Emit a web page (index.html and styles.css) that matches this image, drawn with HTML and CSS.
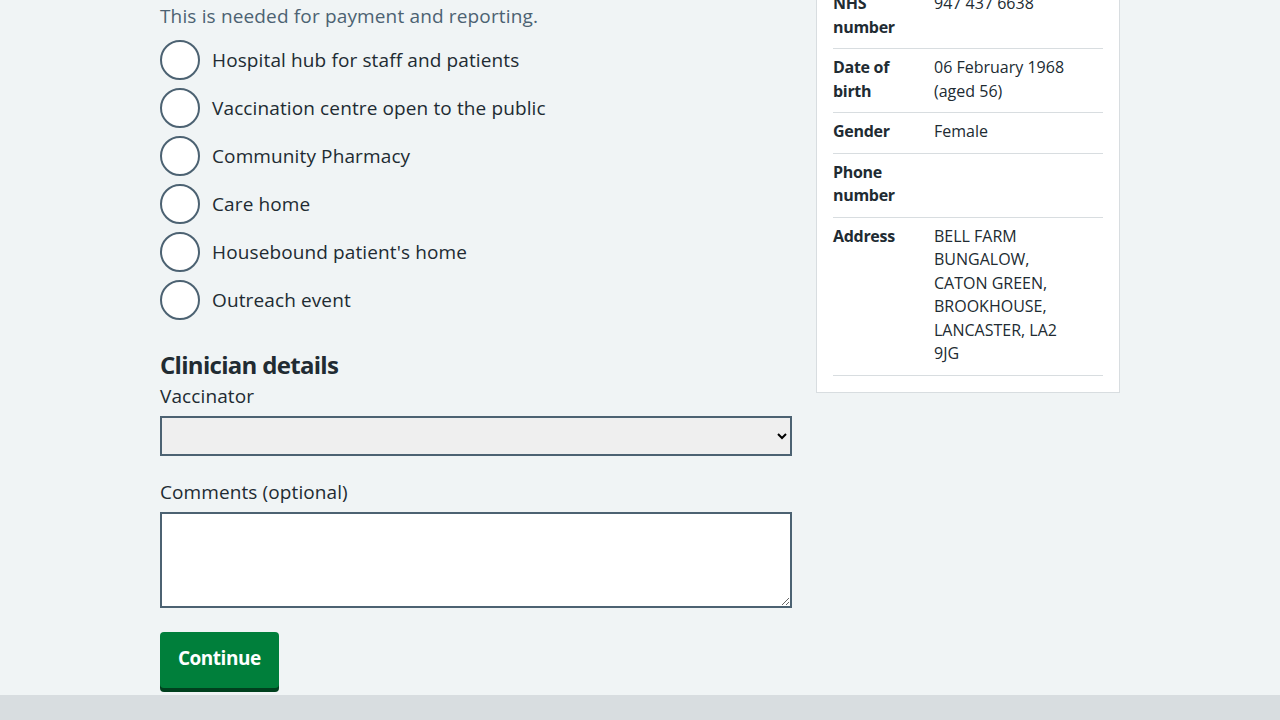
FILE: index.html
```html
<!DOCTYPE html>
<html lang="en">
<head>
<meta charset="utf-8">
<title>Record vaccination</title>
<link rel="stylesheet" href="styles.css">
</head>
<body>
<main class="page">
  <div class="layout">
    <div class="main-col">
      <form class="form">
        <fieldset class="fieldset">
          <p class="hint">This is needed for payment and reporting.</p>
          <div class="radios">
            <label class="radio"><span class="radio-circle"></span><span class="radio-label">Hospital hub for staff and patients</span></label>
            <label class="radio"><span class="radio-circle"></span><span class="radio-label">Vaccination centre open to the public</span></label>
            <label class="radio"><span class="radio-circle"></span><span class="radio-label">Community Pharmacy</span></label>
            <label class="radio"><span class="radio-circle"></span><span class="radio-label">Care home</span></label>
            <label class="radio"><span class="radio-circle"></span><span class="radio-label">Housebound patient's home</span></label>
            <label class="radio"><span class="radio-circle"></span><span class="radio-label">Outreach event</span></label>
          </div>
        </fieldset>
        <h2 class="heading">Clinician details</h2>
        <label class="label" for="vaccinator">Vaccinator</label>
        <select id="vaccinator" class="select"><option></option></select>
        <label class="label" for="comments">Comments (optional)</label>
        <textarea id="comments" class="textarea"></textarea>
        <button type="button" class="button">Continue</button>
      </form>
    </div>
    <aside class="side-col">
      <div class="card">
        <dl class="summary">
          <div class="row"><dt class="key">NHS number</dt><dd class="value">947 437 6638</dd></div>
          <div class="row"><dt class="key">Date of birth</dt><dd class="value">06 February 1968 (aged 56)</dd></div>
          <div class="row"><dt class="key">Gender</dt><dd class="value">Female</dd></div>
          <div class="row"><dt class="key">Phone number</dt><dd class="value"></dd></div>
          <div class="row"><dt class="key">Address</dt><dd class="value">BELL FARM BUNGALOW, CATON GREEN, BROOKHOUSE, LANCASTER, LA2 9JG</dd></div>
        </dl>
      </div>
    </aside>
  </div>
</main>
<footer class="footer"></footer>
</body>
</html>
```

FILE: styles.css
```css
html, body {
  margin: 0;
  padding: 0;
  background: #f0f4f5;
  color: #212b32;
  font-family: "Open Sans", "Noto Sans", sans-serif;
}

.layout {
  width: 960px;
  margin: 0 auto;
  display: grid;
  grid-template-columns: 632px 304px;
  column-gap: 24px;
  align-items: start;
  padding-bottom: 7px;
}

.form {
  margin: 0;
}

.fieldset {
  border: 0;
  margin: 0;
  padding: 0;
}

.hint {
  margin: 0;
  padding-top: 2px;
  font-size: 19px;
  line-height: 28px;
  letter-spacing: 0.15px;
  color: #4c6272;
}

.radios {
  margin-top: 10px;
  display: flex;
  flex-direction: column;
  gap: 8px;
}

.radio {
  display: flex;
  align-items: center;
  gap: 12px;
  height: 40px;
}

.radio-circle {
  box-sizing: border-box;
  width: 40px;
  height: 40px;
  border: 2px solid #4c6272;
  border-radius: 50%;
  background: #ffffff;
  flex: none;
}

.radio-label {
  font-size: 19px;
  line-height: 28px;
  letter-spacing: 0.12px;
  color: #212b32;
}

.heading {
  margin: 29px 0 0;
  font-size: 24px;
  line-height: 32px;
  font-weight: 700;
  letter-spacing: -0.7px;
  color: #212b32;
}

.label {
  display: block;
  font-size: 19px;
  line-height: 28px;
  letter-spacing: 0.1px;
  margin-bottom: 6px;
  color: #212b32;
}

.heading + .label {
  margin-top: 1px;
}

.select {
  display: block;
  box-sizing: border-box;
  width: 632px;
  height: 40px;
  border: 2px solid #4c6272;
  border-radius: 0;
  background-color: #efefef;
  font-family: inherit;
  font-size: 19px;
  margin: 0 0 22px;
}

.textarea {
  display: block;
  box-sizing: border-box;
  width: 632px;
  height: 96px;
  border: 2px solid #4c6272;
  border-radius: 0;
  background: #ffffff;
  font-family: inherit;
  font-size: 19px;
  margin: 0 0 24px;
}

.button {
  display: block;
  box-sizing: border-box;
  height: 56px;
  padding: 10px 16px 14px;
  border: 2px solid transparent;
  border-radius: 4px;
  background: #007f3b;
  box-shadow: 0 4px 0 #00401e;
  color: #ffffff;
  font-family: inherit;
  font-size: 19px;
  font-weight: 700;
  line-height: 28px;
  letter-spacing: -0.5px;
  cursor: pointer;
}

.card {
  margin-top: -32px;
  background: #ffffff;
  border: 1px solid #d8dde0;
  padding: 16px;
}

.summary {
  margin: 0;
}

.row {
  display: grid;
  grid-template-columns: 101px 150px;
  padding: 7px 0 9px;
  border-bottom: 1px solid #d8dde0;
  font-size: 16px;
  line-height: 23.5px;
}

.key {
  font-weight: 700;
  letter-spacing: -0.3px;
  margin: 0;
  padding-right: 16px;
}

.value {
  margin: 0;
}

.footer {
  background: #d8dde0;
  height: 120px;
}
```
